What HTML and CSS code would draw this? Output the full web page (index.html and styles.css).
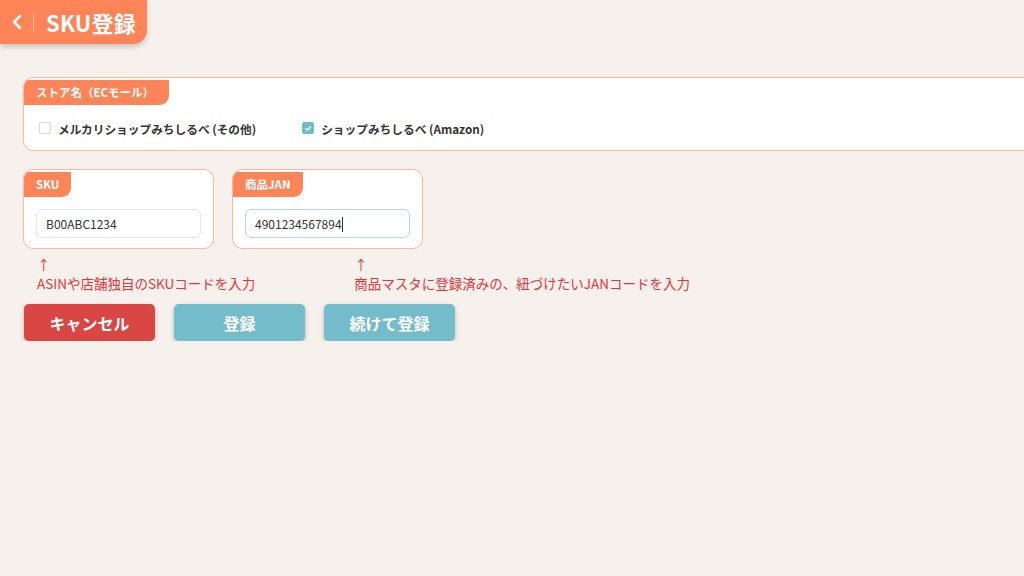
FILE: index.html
```html
<!DOCTYPE html>
<html lang="ja">
<head>
    <meta charset="UTF-8">
    <meta name="viewport" content="width=device-width, initial-scale=1.0">
    <title>SKU登録</title>
    <link rel="stylesheet" href="styles.css">
</head>
<body class="background">
    <!--ヘッダー-->
    <div class="page_head">
        <svg class="back" width="12" height="16" viewBox="0 0 12 16">
            <path d="M9 2 L3 8 L9 14" fill="none" stroke="#fff" stroke-width="2.6" stroke-linecap="round" stroke-linejoin="round"/>
        </svg>
        <span class="divider"></span>
        <span class="page_title">SKU登録</span>
    </div>

    <div class="content">
        <div class="card store_card">
            <div class="card_label">ストア名（ECモール）</div>
            <div class="store_list">
                <label class="check_item">
                    <span class="check"></span>
                    メルカリショップみちしるべ (その他)
                </label>
                <label class="check_item">
                    <span class="check checked">
                        <svg width="11" height="11" viewBox="0 0 11 11">
                            <path d="M3 5.6 L4.8 7.3 L8.2 3.8" fill="none" stroke="#fff" stroke-width="1.6" stroke-linecap="round" stroke-linejoin="round"/>
                        </svg>
                    </span>
                    ショップみちしるべ (Amazon)
                </label>
            </div>
        </div>

        <div class="field_row">
            <div class="card field_card">
                <div class="card_label">SKU</div>
                <div class="input">B00ABC1234</div>
            </div>
            <div class="card field_card">
                <div class="card_label">商品JAN</div>
                <div class="input focus">4901234567894<span class="caret"></span></div>
            </div>
        </div>

        <div class="notes">
            <div class="note note_sku">↑<br>ASINや店舗独自のSKUコードを入力</div>
            <div class="note note_jan">↑<br>商品マスタに登録済みの、紐づけたいJANコードを入力</div>
        </div>

        <div class="buttons">
            <button class="btn btn_cancel">キャンセル</button>
            <button class="btn btn_ok">登録</button>
            <button class="btn btn_ok">続けて登録</button>
        </div>
    </div>
</body>
</html>
```

FILE: styles.css
```css
body {
    margin: 0;
    font-family: "Noto Sans CJK JP", "Noto Sans", sans-serif;
}
.background {
    background-color: #f6f1ed;
    overflow: hidden;
}
.page_head {
    width: 147px;
    height: 44px;
    background: #ff8458;
    border-bottom-right-radius: 14px;
    box-shadow: 0 3px 5px rgba(0, 0, 0, 0.18);
    display: flex;
    align-items: center;
    box-sizing: border-box;
    padding-left: 11px;
}
.back {
    display: block;
}
.divider {
    width: 1px;
    height: 20px;
    background: #ffc0a6;
    margin-left: 10px;
    margin-right: 12px;
}
.page_title {
    color: #fff;
    font-size: 22px;
    font-weight: bold;
    letter-spacing: 0.2px;
}
.content {
    padding: 33px 0 0 23px;
}
.card {
    background: #fff;
    border: 1px solid #fcb89d;
    border-radius: 10px;
    overflow: hidden;
}
.card_label {
    display: inline-block;
    background: #ff8458;
    color: #fff;
    font-size: 11.5px;
    font-weight: bold;
    height: 25px;
    line-height: 25px;
    padding: 0 15px 0 12px;
    border-bottom-right-radius: 9px;
}
.field_card .card_label {
    padding-right: 12px;
}
.store_card {
    height: 72px;
    margin-right: -30px;
}
.store_list {
    display: flex;
    padding: 14px 0 0 15px;
}
.check_item {
    display: flex;
    align-items: center;
    font-size: 11.7px;
    font-weight: bold;
    color: #333;
    height: 18px;
}
.check_item + .check_item {
    margin-left: 46px;
}
.check {
    width: 10px;
    height: 10px;
    border: 1px solid #d8d8d8;
    border-radius: 2px;
    margin-right: 7px;
    display: flex;
    align-items: center;
    justify-content: center;
}
.check.checked {
    background: #6fbdcb;
    border-color: #6fbdcb;
}
.field_row {
    display: flex;
    gap: 18px;
    margin-top: 18px;
}
.field_card {
    width: 189px;
    height: 78px;
}
.input {
    margin: 12px 12px 0 12px;
    height: 27px;
    border: 1px solid #e6e6e6;
    border-radius: 6px;
    font-size: 12px;
    color: #333;
    line-height: 27px;
    padding-left: 9px;
}
.input.focus {
    border-color: #aedbe4;
    padding-left: 9px;
}
.caret {
    display: inline-block;
    width: 1px;
    height: 15px;
    background: #333;
    vertical-align: middle;
    margin-top: -2px;
}
.notes {
    display: flex;
    margin-top: 6px;
}
.note {
    color: #e2383c;
    font-size: 13.5px;
    line-height: 19px;
}
.note_sku {
    margin-left: 14px;
}
.note_jan {
    margin-left: 99px;
}
.buttons {
    display: flex;
    gap: 19px;
    margin-top: 11px;
}
.btn {
    width: 131px;
    height: 37px;
    border: none;
    border-radius: 5px;
    color: #fff;
    font-family: "Noto Sans CJK JP", sans-serif;
    font-size: 16px;
    font-weight: bold;
    box-shadow: 0 2px 4px rgba(0, 0, 0, 0.25);
}
.btn_cancel {
    background: #da4644;
    margin-left: 1px;
}
.btn_ok {
    background: #74bcc9;
}
```
